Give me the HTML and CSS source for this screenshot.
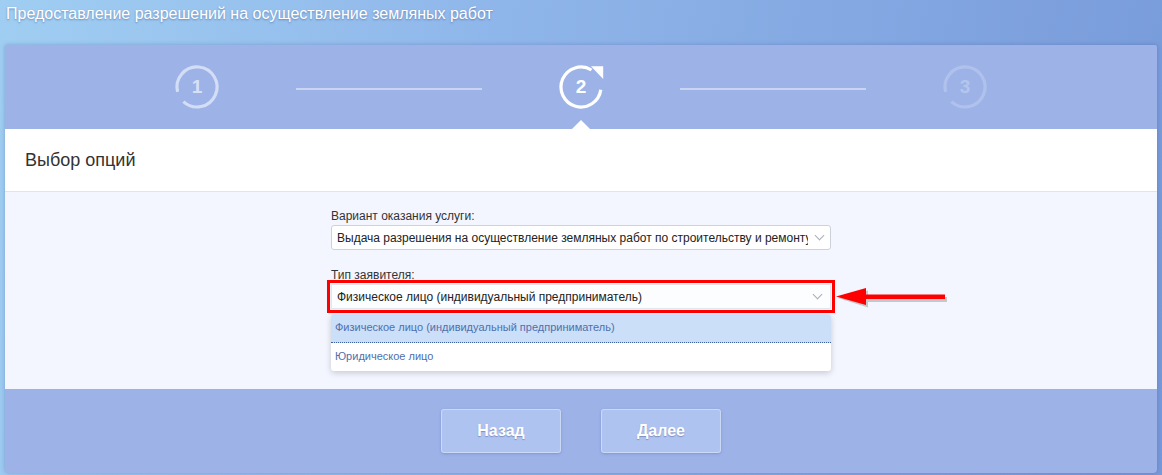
FILE: index.html
```html
<!DOCTYPE html>
<html lang="ru">
<head>
    <meta charset="utf-8">
    <title>Предоставление разрешений на осуществление земляных работ</title>
    <link rel="stylesheet" href="styles.css">
</head>
<body>
    <div class="page-title">Предоставление разрешений на осуществление земляных работ</div>

    <div class="panel">
        <div class="steps">
            <div class="step step-done">
                <svg width="46" height="46" viewBox="0 0 46 46"><path d="M3.6 27.8 A20 20 0 1 1 9.4 37.6" /></svg>
                <span>1</span>
            </div>
            <div class="step-line"></div>
            <div class="step step-current">
                <svg width="46" height="46" viewBox="0 0 46 46"><path d="M42.8 25.8 A20 20 0 1 1 33.5 6" /><polygon class="tip" points="33,2.2 45.2,2.2 45.2,15" /></svg>
                <span>2</span>
            </div>
            <div class="step-line"></div>
            <div class="step step-next">
                <svg width="46" height="46" viewBox="0 0 46 46"><path d="M3.6 27.8 A20 20 0 1 1 9.4 37.6" /></svg>
                <span>3</span>
            </div>
            <div class="step-pointer"></div>
        </div>

        <div class="section-head">Выбор опций</div>

        <div class="form-area">
            <div class="form-col">
                <label class="field-label">Вариант оказания услуги:</label>
                <div class="select">
                    <span class="select-text">Выдача разрешения на осуществление земляных работ по строительству и ремонту</span>
                    <span class="chevron"></span>
                </div>

                <label class="field-label">Тип заявителя:</label>
                <div class="select select-marked">
                    <span class="select-text">Физическое лицо (индивидуальный предприниматель)</span>
                    <span class="chevron"></span>
                    <ul class="dropdown">
                        <li class="active">Физическое лицо (индивидуальный предприниматель)</li>
                        <li>Юридическое лицо</li>
                    </ul>
                    <svg class="red-arrow" width="116" height="26" viewBox="0 0 116 26">
                        <path class="shade" d="M3 13 L33 5.5 L33 12 L112 12 L112 17 L33 17 L33 22.5 Z" />
                        <path class="fill" d="M1 11.5 L31 3 L31 9.5 L110 9.5 L110 14 L31 14 L31 20 Z" />
                    </svg>
                </div>
            </div>
        </div>

        <div class="buttons">
            <button class="btn">Назад</button>
            <button class="btn">Далее</button>
        </div>
    </div>
</body>
</html>
```

FILE: styles.css
```css
html, body { margin: 0; padding: 0; }
body { width: 1162px; height: 475px; overflow: hidden; font-family: "Liberation Sans", Arial, sans-serif; background: linear-gradient(100deg, #a0cef2 0%, #8fb6ea 40%, #7799d9 100%); }

.page-title { height: 45px; padding-left: 6px; line-height: 27px; font-size: 16px; color: #fff; text-shadow: 0 1px 2px rgba(40,60,110,0.45); }

.panel { margin: 0 5px; height: 428px; background: #9db3e8; border-radius: 2px 2px 4px 4px; box-shadow: 0 0 4px rgba(60,80,150,0.35); overflow: hidden; }

.steps { position: relative; height: 84px; display: flex; align-items: center; justify-content: center; gap: 76px; }
.step { position: relative; width: 46px; height: 46px; }
.step svg { position: absolute; left: 0; top: 0; fill: none; stroke-width: 3.2; overflow: visible; }
.step svg .tip { fill: #fff; stroke: none; }
.step span { position: absolute; inset: 0; display: flex; align-items: center; justify-content: center; font-size: 19px; font-weight: bold; }
.step-done svg { stroke: rgba(255,255,255,0.55); }
.step-done span { color: rgba(255,255,255,0.6); }
.step-current svg { stroke: #fff; }
.step-current span { color: #fff; }
.step-next svg { stroke: rgba(255,255,255,0.2); }
.step-next span { color: rgba(255,255,255,0.25); }
.step-line { width: 186px; height: 2px; margin-top: 4px; background: rgba(255,255,255,0.45); }
.step-pointer { position: absolute; left: 567px; bottom: 0; width: 0; height: 0; border-left: 9px solid transparent; border-right: 9px solid transparent; border-bottom: 9px solid #fff; }

.section-head { height: 62px; padding-left: 20px; background: #fff; border-bottom: 1px solid #dde3ef; line-height: 62px; font-size: 18px; color: #333; }

.form-area { height: 197px; background: #f3f6fe; }
.form-col { width: 500px; margin: 0 auto; padding-top: 15px; }
.field-label { display: block; height: 18px; font-size: 12px; color: #333; line-height: 18px; }
.select { position: relative; box-sizing: border-box; height: 25px; margin-bottom: 16px; padding: 0 22px 0 5px; background: #fff; border: 1px solid #cdd2da; border-radius: 3px; display: flex; align-items: center; }
.select-text { flex: 1; overflow: hidden; white-space: nowrap; font-size: 12px; color: #222; }
.chevron { position: absolute; right: 7px; top: 6px; width: 6px; height: 6px; border-right: 1px solid #a9adb5; border-bottom: 1px solid #a9adb5; transform: rotate(45deg); }
.select-marked { background: #fcfdff; border-color: #e3e6ec; border-radius: 0; outline: 3px solid #f00; outline-offset: 1px; }
.select-marked .chevron { right: 9px; }

.dropdown { position: absolute; left: -1px; right: -1px; top: 29px; margin: 0; padding: 0; list-style: none; background: #fff; border-radius: 3px; box-shadow: 0 2px 6px rgba(0,0,0,0.18); overflow: hidden; }
.dropdown li { height: 28px; padding-left: 4px; line-height: 27px; font-size: 11px; color: #4f6fae; }
.dropdown li.active { background: #cbdff8; border-bottom: 1px dotted #3c5e9e; height: 28px; }

.red-arrow { position: absolute; left: 503px; top: 0px; }
.red-arrow .shade { fill: rgba(90,90,90,0.3); }
.red-arrow .fill { fill: #f00; }

.buttons { height: 84px; display: flex; justify-content: center; align-items: flex-start; gap: 40px; padding-top: 20px; box-sizing: border-box; }
.btn { width: 120px; height: 44px; background: #afc3f1; border: 1px solid rgba(255,255,255,0.35); border-radius: 3px; box-shadow: 0 1px 3px rgba(60,80,150,0.3); font-family: "Liberation Sans", Arial, sans-serif; font-size: 16px; font-weight: bold; color: #fff; text-shadow: 0 1px 1px rgba(80,90,140,0.5); cursor: pointer; }
```
